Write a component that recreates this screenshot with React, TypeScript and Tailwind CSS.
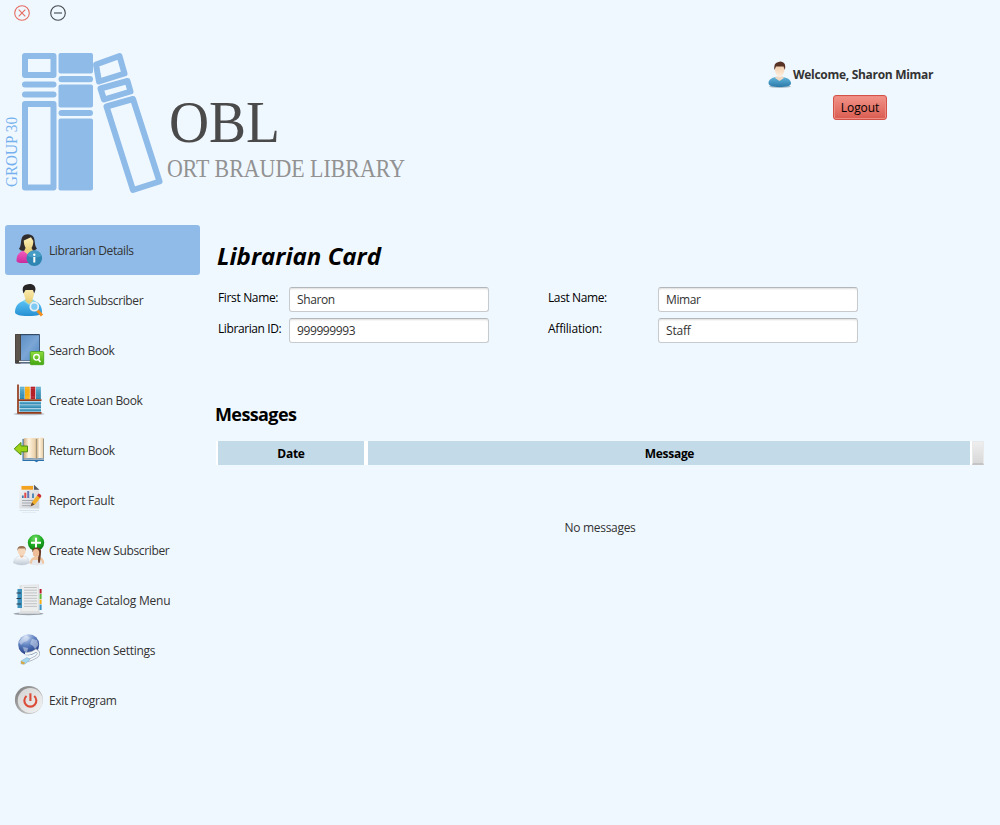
import React from "react";

const LibrarianIcon = () => (
  <>
    <defs>
      <linearGradient id="pink" x1="0" y1="0" x2="0" y2="1"><stop offset="0" stopColor="#f25fc0" /><stop offset="1" stopColor="#c92a9c" /></linearGradient>
      <linearGradient id="face" x1="0" y1="0" x2="0" y2="1"><stop offset="0" stopColor="#fdf0b8" /><stop offset="1" stopColor="#ecd37f" /></linearGradient>
    </defs>
    <path d="M6 14.5C8.5 12 7.5 7 9 3.500C11 -.8 18 -.9 20.500 3C22.500 6.500 21 11 24 14.500L21 17H11C8.500 16.800 7 16.500 6 14.500Z" fill="#302c2e" />
    <path d="M3.500 26.500C3.500 20 7.500 17 12 16.500H21L25 20V29H10C6 29 3.500 28.500 3.500 26.500Z" fill="url(#pink)" />
    <path d="M12.500 14H18.500L20.500 17.500L17 22L11 17.500Z" fill="#ead27d" />
    <path d="M10.800 6.500L18 3.200L20.300 7C20.300 12 18.300 15.700 15.500 15.700S10.800 11.500 10.800 6.500Z" fill="url(#face)" />
    <circle cx="21.3" cy="24.3" r="7.8" fill="#2f86b2" />
    <path d="M14.300 22A7.300 7.300 0 0 1 28.500 22Q22 25 14.300 22Z" fill="#459cc4" />
    <circle cx="21.300" cy="20.700" r="1.200" fill="#fff" />
    <path d="M20.300 23H22.300V28.500H20.300Z" fill="#fff" />
  </>
);

const SearchUserIcon = () => (
  <>
    <defs>
      <linearGradient id="cyan" x1="0" y1="0" x2="0" y2="1"><stop offset="0" stopColor="#5cc3f5" /><stop offset="1" stopColor="#2790d2" /></linearGradient>
    </defs>
    <path d="M2 28C2 21 7 17.500 12 16.500H19.500C25 17.500 29 21 29 28C29 30.500 25 32 15.500 32S2 30.500 2 28Z" fill="url(#cyan)" />
    <path d="M10 17L16 21L22 17L20 15.500H12Z" fill="#8fd9e2" />
    <path d="M12.500 12H19.500V17L16 20L12.500 17Z" fill="#e6cc75" />
    <ellipse cx="16" cy="9.500" rx="5" ry="7" fill="url(#face)" />
    <path d="M10.500 9.500C8.500 4 10.500 1.500 13 .8C17 -.8 22.500 0 22.500 5.500L21.200 9.500L20 6H12.500Z" fill="#282527" />
    <path d="M24.500 26.500L29 31.500" stroke="#f08f1e" strokeWidth="3" />
    <circle cx="21.300" cy="22.700" r="4" fill="#7fcaf3" stroke="#e8eef2" strokeWidth="1.800" />
  </>
);

const SearchBookIcon = () => (
  <>
    <defs>
      <linearGradient id="cover" x1="0" y1="0" x2="1" y2="1"><stop offset="0" stopColor="#5d8ec4" /><stop offset=".5" stopColor="#7ba6d6" /><stop offset="1" stopColor="#5387c2" /></linearGradient>
      <linearGradient id="green" x1="0" y1="0" x2="0" y2="1"><stop offset="0" stopColor="#8edb3c" /><stop offset="1" stopColor="#44a80f" /></linearGradient>
    </defs>
    <rect x="2" y="0" width="25" height="29.500" rx="1" fill="#344b68" />
    <rect x="7.500" y="1.200" width="18.700" height="25" fill="url(#cover)" />
    <rect x="2" y="0" width="6" height="29.500" rx="1" fill="#4a4440" />
    <path d="M4 1V26M6 1V26" stroke="#7c7269" strokeWidth=".7" />
    <path d="M6 27.500H26" stroke="#eef3f8" strokeWidth="1.400" />
    <rect x="17.300" y="17.500" width="13.400" height="13.200" rx="1" fill="url(#green)" stroke="#43a016" strokeWidth=".8" />
    <circle cx="23.500" cy="23.300" r="2.800" fill="none" stroke="#fff" strokeWidth="1.300" />
    <path d="M25.300 25.300L27.500 28" stroke="#fff" strokeWidth="1.500" />
  </>
);

const ShelfIcon = () => (
  <>
    <defs>
      <linearGradient id="teal" x1="0" y1="0" x2="0" y2="1"><stop offset="0" stopColor="#68b5d2" /><stop offset="1" stopColor="#277fa9" /></linearGradient>
    </defs>
    <ellipse cx="16" cy="30" rx="15.500" ry="1.300" fill="#b7bec5" />
    <rect x="6.800" y="2.700" width="4.800" height="12.500" fill="url(#teal)" />
    <rect x="12" y="2.700" width="4.800" height="12.500" fill="#f8ae12" />
    <rect x="17.600" y="2.700" width="4.700" height="12.500" fill="#b41f28" />
    <rect x="23" y="2.700" width="4.900" height="12.500" fill="url(#teal)" />
    <path d="M6.800 4.700H28M6.800 13H28" stroke="#fff" strokeOpacity=".2" strokeWidth=".7" />
    <rect x="6.500" y="17.500" width="21.500" height="3" fill="url(#teal)" />
    <rect x="6.500" y="21" width="21.500" height="3.200" fill="url(#teal)" />
    <rect x="6.500" y="24.700" width="21.500" height="2.800" fill="url(#teal)" />
    <path d="M5 .5V28.800H28.500M5 16.200H28.500" fill="none" stroke="#923b1b" strokeWidth="1.700" />
  </>
);

const ReturnBookIcon = () => (
  <>
    <defs>
      <linearGradient id="page" x1="0" y1="0" x2="1" y2="0"><stop offset="0" stopColor="#caa777" /><stop offset=".4" stopColor="#fff4e1" /><stop offset=".9" stopColor="#ead0a9" /><stop offset="1" stopColor="#b99565" /></linearGradient>
    </defs>
    <path d="M9.500 5H31V27H25.500L23.500 28.300L21.500 27H9.500Z" fill="#2a70ad" />
    <path d="M10.500 24.500H31V25.800H10.500Z" fill="#b8bfc5" />
    <path d="M10.500 4.500Q17 2.800 23.500 4.500V24.500Q17 23.300 10.500 24.500Z" fill="url(#page)" />
    <path d="M23.500 4.500Q27 2.800 30.700 4V24.500Q27 23.300 23.500 24.500Z" fill="url(#page)" />
    <path d="M1.200 14.800L8 8.500V12H14.500V17.800H8V21Z" fill="#9ed216" stroke="#4e8e13" strokeWidth="1" />
  </>
);

const ReportIcon = () => (
  <>
    <defs>
      <linearGradient id="paper" x1="0" y1="0" x2="1" y2="1"><stop offset="0" stopColor="#f5f5f6" /><stop offset="1" stopColor="#cdd0d4" /></linearGradient>
    </defs>
    <path d="M6.300 1H21L26.300 5.500V24.500H6.300Z" fill="url(#paper)" />
    <path d="M8.500 2H20V5.700H8.500Z" fill="#f4a320" />
    <path d="M21 .8L26.300 5.700H21Z" fill="#555b62" />
    <path d="M9.800 14V11.500M20 14V9.500" stroke="#3b79ac" strokeWidth="1.700" />
    <path d="M12.300 14V8.700" stroke="#e14847" strokeWidth="2" />
    <path d="M15.200 14V7" stroke="#6576b3" strokeWidth="2" />
    <path d="M9 16.500H20M9 19H18M9 21.700H17" stroke="#9ea4aa" strokeWidth=".9" />
    <path d="M18 21.700L19 18L25 10.500L28 13L22 20.500Z" fill="#f3ae29" />
    <path d="M24 11.500L25.500 9.500Q27.500 9.500 28.500 12L27 14Z" fill="#c52f39" />
    <path d="M17.300 22.500L19 18.300L21.500 20.700Z" fill="#715139" />
    <path d="M6.500 26H26V27H6.500ZM9 28H23V28.600H9Z" fill="#c7ced6" opacity=".55" />
  </>
);

const NewUserIcon = () => (
  <>
    <defs>
      <radialGradient id="plus" cx=".45" cy=".25" r=".75"><stop offset="0" stopColor="#75df66" /><stop offset=".55" stopColor="#1eab24" /><stop offset="1" stopColor="#06780e" /></radialGradient>
      <linearGradient id="shirt" x1="0" y1="0" x2="0" y2="1"><stop offset="0" stopColor="#fff" /><stop offset="1" stopColor="#bec9d5" /></linearGradient>
    </defs>
    <circle cx="23" cy="8.800" r="8.200" fill="url(#plus)" />
    <path d="M18 8.800H28M23 3.800V13.800" stroke="#fff" strokeWidth="2" />
    <path d="M.5 29C1 24 4 22.500 7 22H11C14 23 16 24 16.300 29Q9 33 .5 29Z" fill="url(#shirt)" stroke="#bdc5cf" strokeWidth=".4" />
    <path d="M7 20H10.500V22.500L8.800 24L7 22.500Z" fill="#e6b996" />
    <ellipse cx="8.700" cy="17" rx="3.900" ry="4.700" fill="#f6d6ba" />
    <path d="M4.500 17Q3.700 12 8.700 12T12.800 17L12 14.500H5.500Z" fill="#977052" />
    <path d="M16.500 29.500Q17 24 21 23H27Q31 24 31.300 29.500Q24 33 16.500 29.500Z" fill="#efc7a3" />
    <path d="M18 31L20 26H28L30 31Z" fill="#e5e9ed" />
    <path d="M19.500 18Q18.500 13.500 23.700 13.500T28 19L27 28Q25.500 31 25 27L25.500 19Z" fill="#6c3c25" />
    <ellipse cx="23" cy="19" rx="3.200" ry="4.100" fill="#eebc97" />
  </>
);

const CatalogIcon = () => (
  <>
    <ellipse cx="15.500" cy="29.800" rx="15" ry="1.500" fill="#9ba2a9" />
    <path d="M6.500 1L26 .5L26.700 29.800H5.500L7.500 27Z" fill="#dedfe1" />
    <path d="M8.500 1.500H25V27H8.500Z" fill="#eceded" />
    <path d="M11 3.500H24M11 6.200H24M11 8.900H24M11 11.600H24M11 14.300H24M11 17H24M11 19.700H24M11 22.400H24" stroke="#b5b9bd" strokeWidth=".8" />
    <rect x="4.500" y="5" width="4.500" height="19" fill="#3e92bd" />
    <path d="M3.500 9H8M3.500 14.500H8M3.500 20H8" stroke="#273e50" strokeWidth="1.200" />
    <path d="M27.600 5V9.500" stroke="#ba1d2a" strokeWidth="2" /><path d="M27.600 10V15" stroke="#5bb936" strokeWidth="2" />
    <path d="M27.600 15.500V20" stroke="#f6ae15" strokeWidth="2" /><path d="M27.600 20.500V26" stroke="#3a94c3" strokeWidth="2" />
  </>
);

const ConnectionIcon = () => (
  <>
    <defs>
      <radialGradient id="globe" cx=".35" cy=".1" r=".95"><stop offset="0" stopColor="#d3e1f6" /><stop offset=".45" stopColor="#6284c2" /><stop offset="1" stopColor="#16317c" /></radialGradient>
    </defs>
    <circle cx="15.700" cy="10.700" r="10.500" fill="url(#globe)" />
    <path d="M9 4L14 1.500L17 4L14 7L11 8L8 11L5.500 8ZM19 5L24 6L25.500 11L22 15L20 12L17 10ZM10 13L15 14L14 19L11 17Z" fill="#dfe8f5" opacity=".5" />
    <path d="M12 19.500Q18 20.500 23 16.500Q28 19 23 23Q18 26 13 27" fill="none" stroke="#9ca9b7" strokeWidth="3.200" />
    <path d="M12 19.500Q18 20.500 23 16.500Q28 19 23 23Q18 26 13 27" fill="none" stroke="#f4f7fa" strokeWidth="1.900" />
    <path d="M8 27L14 23.500L17 25.500L12 30L8 30Z" fill="#a5d8ef" stroke="#7aa9c4" strokeWidth=".5" />
    <path d="M8 27L12 28.500L11 30.500L8 29.500Z" fill="#d6a846" />
  </>
);

const ExitIcon = () => (
  <>
    <defs>
      <linearGradient id="metal" x1="0" y1="0" x2="1" y2="1"><stop offset="0" stopColor="#777" /><stop offset=".5" stopColor="#aaa" /><stop offset="1" stopColor="#d5d5d5" /></linearGradient>
      <linearGradient id="silver" x1="0" y1="0" x2="1" y2="1"><stop offset="0" stopColor="#d4d4d4" /><stop offset="1" stopColor="#f2f2f2" /></linearGradient>
    </defs>
    <circle cx="15.900" cy="16" r="14" fill="url(#metal)" />
    <circle cx="17.200" cy="16.500" r="12.500" fill="url(#silver)" />
    <path d="M13.500 12A6 6 0 1 0 21.200 12" fill="none" stroke="#dc4b37" strokeWidth="2.100" />
    <path d="M17.400 9.300V17" stroke="#dc4b37" strokeWidth="2.100" />
  </>
);

const menu = [
  { label: "Librarian Details", icon: <LibrarianIcon />, tracking: "tracking-[-0.4px]", active: true },
  { label: "Search Subscriber", icon: <SearchUserIcon />, tracking: "tracking-[-0.39px]" },
  { label: "Search Book", icon: <SearchBookIcon />, tracking: "tracking-[-0.37px]" },
  { label: "Create Loan Book", icon: <ShelfIcon />, tracking: "tracking-[-0.35px]" },
  { label: "Return Book", icon: <ReturnBookIcon />, tracking: "tracking-[-0.35px]" },
  { label: "Report Fault", icon: <ReportIcon />, tracking: "tracking-[-0.28px]" },
  { label: "Create New Subscriber", icon: <NewUserIcon />, tracking: "tracking-[-0.36px]" },
  { label: "Manage Catalog Menu", icon: <CatalogIcon />, tracking: "tracking-[-0.2px]" },
  { label: "Connection Settings", icon: <ConnectionIcon />, tracking: "tracking-[-0.28px]" },
  { label: "Exit Program", icon: <ExitIcon />, tracking: "tracking-[-0.36px]" },
];

function Logo() {
  return (
    <svg width="420" height="170" viewBox="0 40 420 170" className="block overflow-visible">
      <g fill="none" stroke="#8fbbe8" strokeWidth="6" strokeLinejoin="round">
        <rect x="25" y="56" width="28.500" height="19" />
        <rect x="25" y="104" width="28.500" height="83.500" />
        <path d="M25 84.500H53.500M25 94.500H53.500" strokeLinecap="round" />
        <path d="M96 64.500L119.500 56L124.500 73.500L99 81.500Z" />
        <path d="M100.500 88.500L127.500 81L130.500 91.500L104 99.500Z" />
        <path d="M106.500 106.500L133 99L159.500 181.500L133 190Z" />
      </g>
      <g fill="#8fbbe8">
        <rect x="58.500" y="53" width="34.500" height="20.500" rx="2" />
        <rect x="58.500" y="76" width="34.500" height="6.200" rx="3" />
        <rect x="58.500" y="84.500" width="34.500" height="23" rx="2" />
        <rect x="58.500" y="110" width="34.500" height="6" rx="3" />
        <rect x="58.500" y="118.500" width="34.500" height="72" rx="2" />
      </g>
      <g fontFamily="'Liberation Serif', serif">
        <text transform="translate(16.500 187) rotate(-90)" fontSize="16.500" fill="#75b0ee" textLength="70" lengthAdjust="spacingAndGlyphs">GROUP 30</text>
        <text x="169" y="141.500" fontSize="60" fill="#4a4a4a" textLength="111" lengthAdjust="spacingAndGlyphs">OBL</text>
        <text x="167" y="176.500" fontSize="25" fill="#929292" textLength="238" lengthAdjust="spacingAndGlyphs">ORT BRAUDE LIBRARY</text>
      </g>
    </svg>
  );
}

function Avatar() {
  return (
    <svg width="24" height="28" viewBox="0 0 24 28" className="block">
      <defs>
        <linearGradient id="blue" x1="0" y1="0" x2="0" y2="1"><stop offset="0" stopColor="#62b5dc" /><stop offset="1" stopColor="#2b79a9" /></linearGradient>
        <linearGradient id="skin" x1="0" y1="0" x2="0" y2="1"><stop offset="0" stopColor="#edc39f" /><stop offset="1" stopColor="#fff0df" /></linearGradient>
      </defs>
      <ellipse cx="12" cy="25.500" rx="11" ry="1.500" fill="#a9bdca" />
      <path d="M.5 22C.5 18 5 16.500 8 16H15C20 17 23 19 23 22.500C23 25 18 26 11.500 26S.5 25 .5 22Z" fill="url(#blue)" />
      <path d="M8 15.500H15L16 17L11.500 20L7 17Z" fill="#f0d9c5" />
      <ellipse cx="11.700" cy="9" rx="4.700" ry="6.500" fill="url(#skin)" />
      <path d="M6.500 9Q5.500 4 8 2Q13 -1 16 2Q18 4 16.800 9L15.500 5.500H8Z" fill="#573225" />
    </svg>
  );
}

function Field({ label, value, labelClass, valueClass }: { label: string; value: string; labelClass: string; valueClass: string }) {
  return (
    <label className="flex h-[25px]">
      <span className={`${labelClass} shrink-0 text-xs leading-[22px] text-black`}>{label}</span>
      <input
        readOnly
        defaultValue={value}
        className={`${valueClass} h-[25px] w-[200px] rounded-[3px] border border-[#c8cbce] border-t-[#b3b7ba] bg-white px-[7px] text-xs text-[#333] shadow-[inset_0_2px_2px_-1px_#ddd] outline-none`}
      />
    </label>
  );
}

export default function App() {
  return (
    <div className="flex h-[825px] w-[1000px] flex-col overflow-hidden bg-[#f0f8ff] font-['Open_Sans','Noto_Sans',sans-serif] text-[#333]">
      <div className="h-[26px] shrink-0 bg-[#eff7ff] pl-[14px] pt-[5px]">
        <svg width="54" height="17" viewBox="0 0 54 17" fill="none">
          <g stroke="#e56c61" strokeWidth="1.100"><circle cx="8" cy="8" r="7.300" /><path d="M4.700 4.700L11.300 11.300M11.300 4.700L4.700 11.300" /></g>
          <g stroke="#43484d" strokeWidth="1.100"><circle cx="44" cy="8" r="7.300" /><path d="M40 8H48" /></g>
        </svg>
      </div>
      <header className="flex h-[199px] shrink-0 justify-between pt-[14px]">
        <Logo />
        <div className="mr-[65px] flex w-[167px] flex-col pt-[21px]">
          <div className="flex h-7 items-center gap-px">
            <Avatar />
            <span className="whitespace-nowrap text-xs font-bold tracking-[-0.3px]">Welcome, Sharon Mimar</span>
          </div>
          <button className="ml-[65px] mt-[6px] h-[25px] w-[54px] rounded-[3px] border border-[#d25248] bg-linear-to-b from-[#f29389] to-[#d95b50] text-xs tracking-[-0.1px] text-black shadow-[inset_0_0_0_1px_#ec8c83]">Logout</button>
        </div>
      </header>
      <div className="flex flex-1">
        <nav className="ml-[5px] w-[195px]">
          {menu.map((m) => (
            <a key={m.label} className={`flex h-[50px] items-center gap-[2px] rounded-[3px] pl-2 pt-[2px] ${m.active ? "bg-[#90bbe9]" : ""}`}>
              <svg width="34" height="34" viewBox="0 0 34 34">{m.icon}</svg>
              <span className={`whitespace-nowrap text-xs ${m.tracking}`}>{m.label}</span>
            </a>
          ))}
        </nav>
        <main className="ml-4 w-[768px]">
          <h1 className="h-[62px] whitespace-nowrap pl-px pt-[15px] text-2xl font-bold italic leading-8 tracking-[0.02px] text-black">Librarian Card</h1>
          <div className="flex gap-[59px] pl-[2px]">
            <div className="flex flex-col gap-[6px]">
              <Field label="First Name:" value="Sharon" labelClass="w-[71px] tracking-[-0.35px]" valueClass="tracking-[-0.4px]" />
              <Field label="Librarian ID:" value="999999993" labelClass="w-[71px] tracking-[-0.4px]" valueClass="tracking-[-0.4px]" />
            </div>
            <div className="flex flex-col gap-[6px]">
              <Field label="Last Name:" value="Mimar" labelClass="w-[110px] tracking-[-0.4px]" valueClass="tracking-[-0.4px]" />
              <Field label="Affiliation:" value="Staff" labelClass="w-[110px] tracking-[-0.22px]" valueClass="tracking-[-0.2px]" />
            </div>
          </div>
          <h2 className="-ml-px mt-[59px] h-[39px] text-lg font-bold leading-6 tracking-[-0.6px] text-black">Messages</h2>
          <div className="flex h-6 bg-white pl-[2px] text-center text-xs font-bold leading-[25px] text-black">
            <div className="w-[146px] bg-[#c3dae8] tracking-[-0.25px]">Date</div>
            <div className="ml-1 w-[602px] bg-[#c3dae8] pl-px tracking-[-0.3px]">Message</div>
            <div className="ml-[2px] w-3 border border-b-2 border-[#e9e9e9] border-b-[#c4c4c4] bg-linear-to-b from-[#eee] to-[#d8d8d8]" />
          </div>
          <p className="mt-[53px] text-center text-xs leading-5 tracking-[-0.3px]">No messages</p>
        </main>
      </div>
    </div>
  );
}
